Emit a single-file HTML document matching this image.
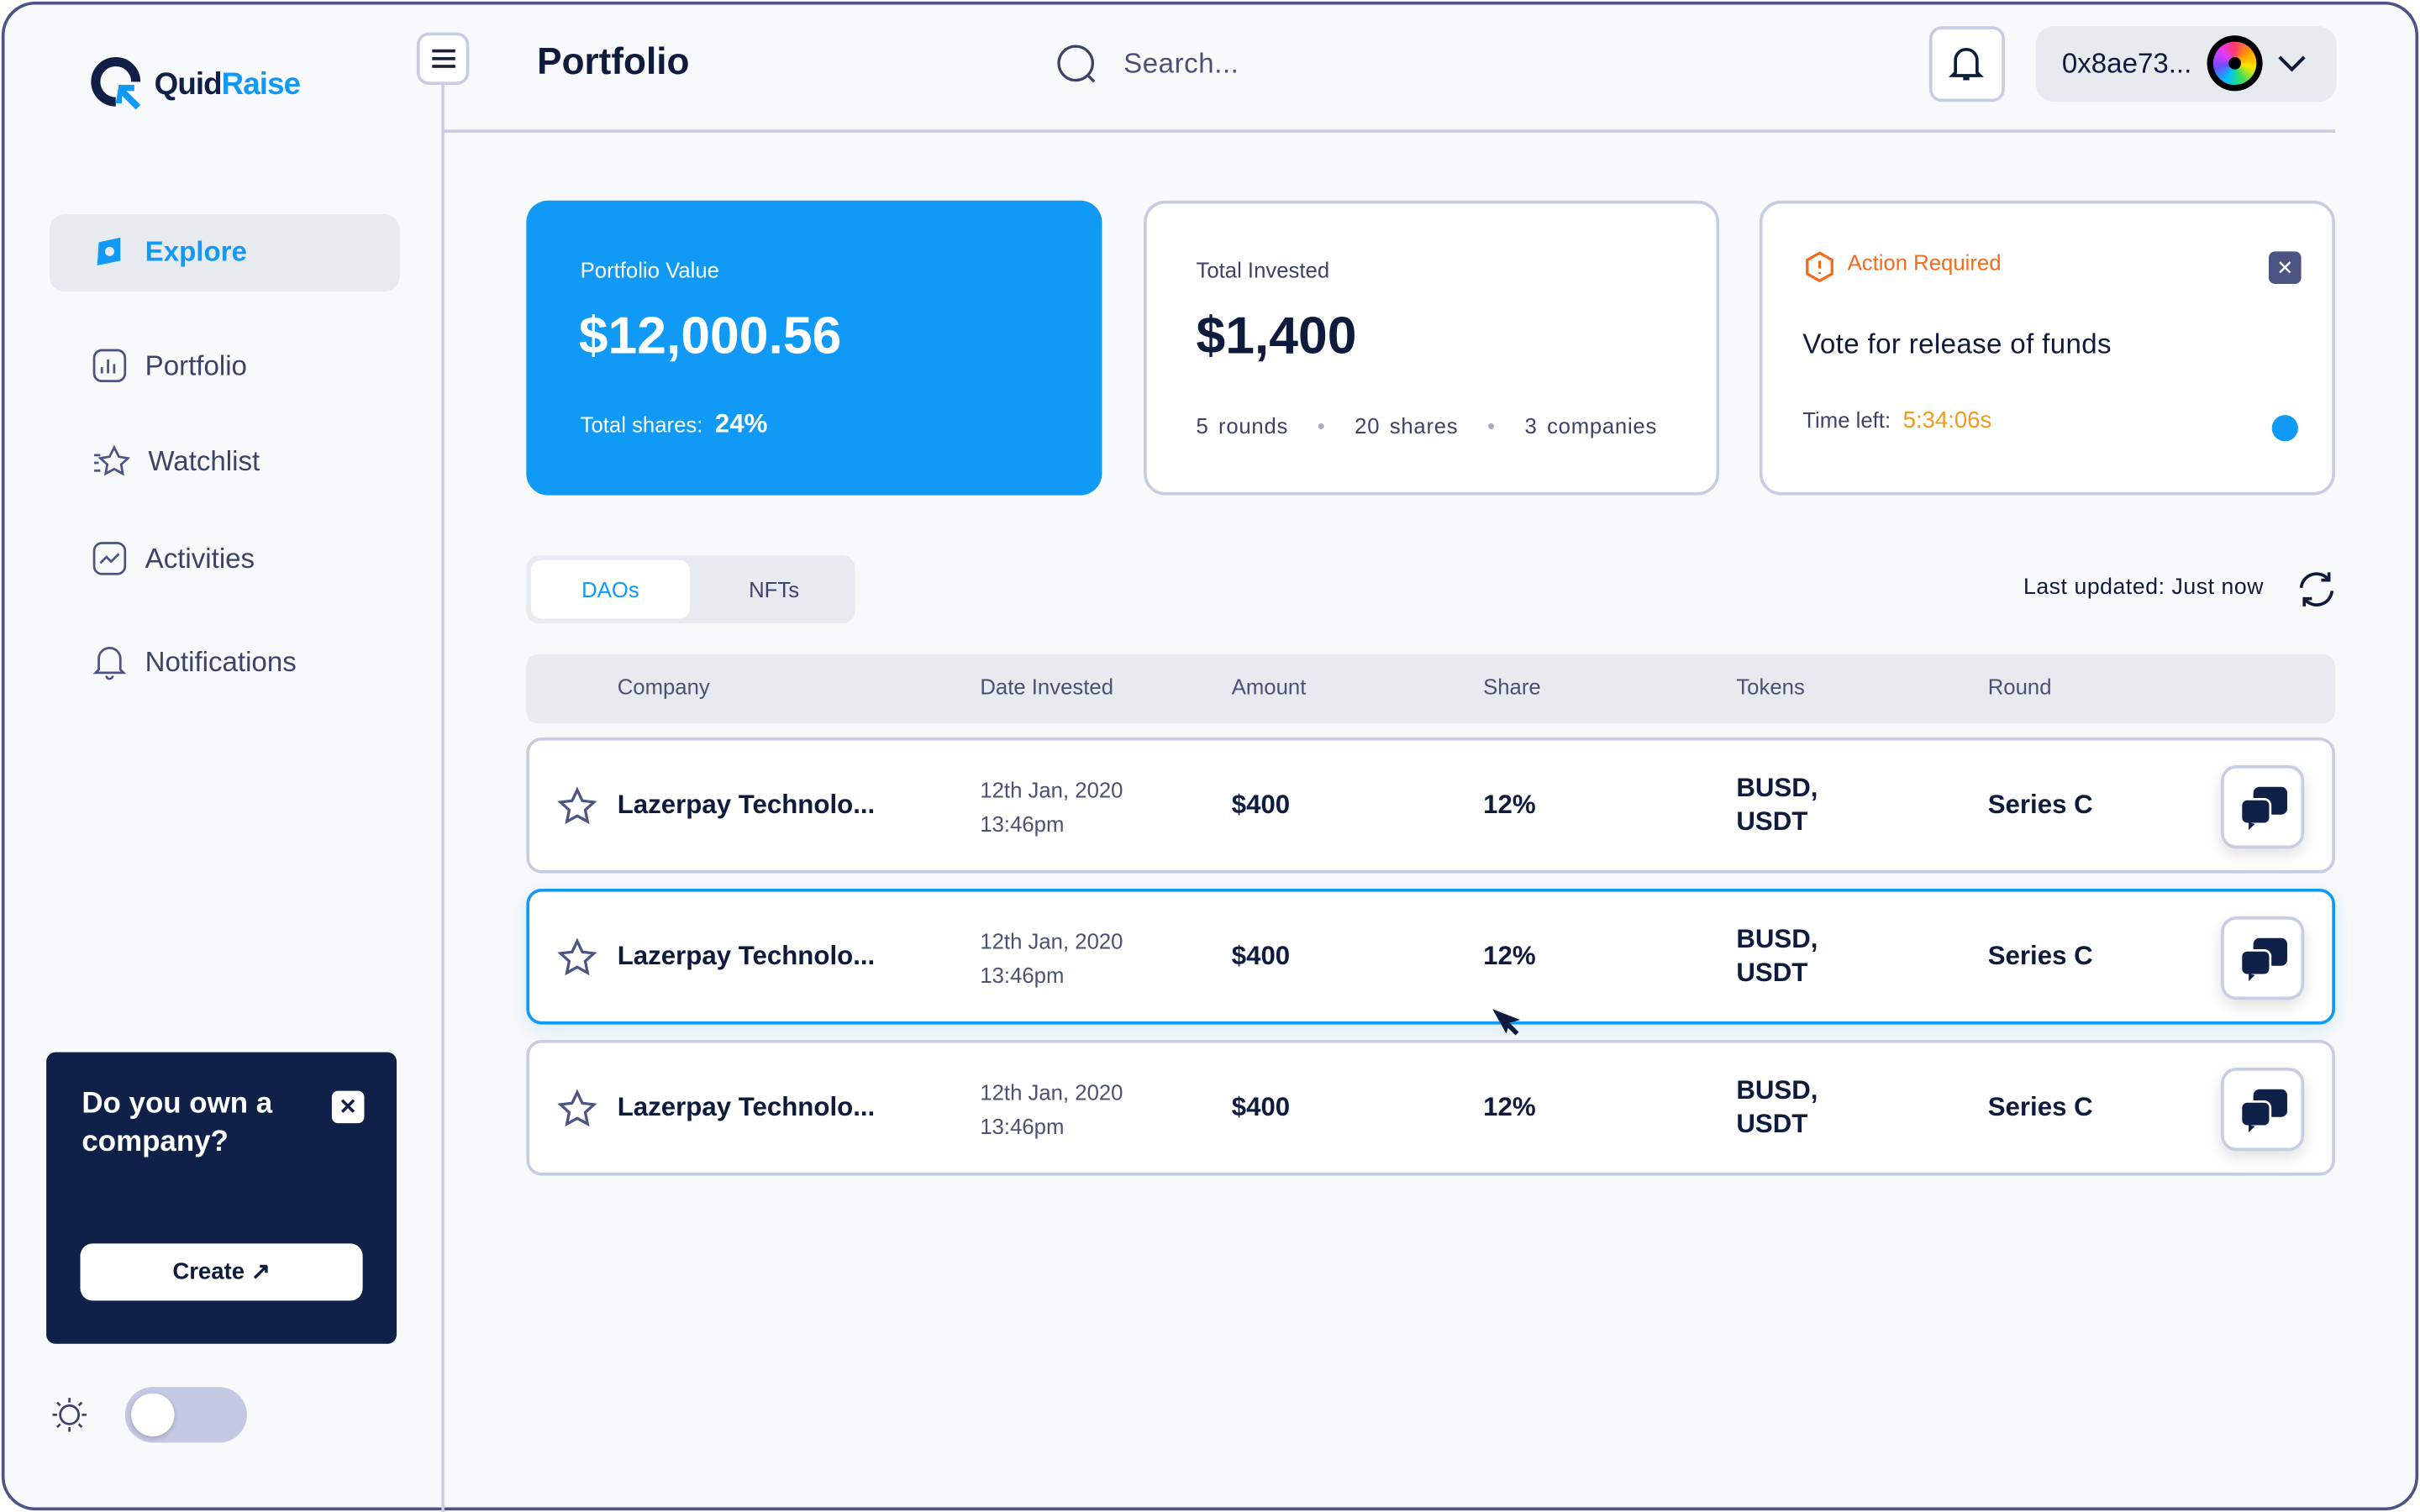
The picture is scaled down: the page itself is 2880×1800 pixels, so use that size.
<!DOCTYPE html>
<html><head><meta charset="utf-8"><style>
*{box-sizing:border-box;margin:0;padding:0}
html,body{width:2880px;height:1800px;overflow:hidden;background:#fff}
#s{width:1568px;height:980px;transform:scale(1.836735);transform-origin:0 0;position:relative;font-family:"Liberation Sans",sans-serif;color:#0f1b3d}
.frame{position:absolute;left:1px;top:1px;width:1566px;height:978px;border:2px solid #4b5483;border-radius:22px;background:#f8f9fb;overflow:hidden}
.a{position:absolute}
.card{position:absolute;border-radius:14px}
.nav{position:absolute;left:60px;font-size:18px;color:#3b4468;display:flex;align-items:center;gap:12px}
.row{position:absolute;left:341px;width:1172px;height:88px;background:#fff;border:2px solid #c8cde3;border-radius:10px}
.row .t{position:absolute;font-size:17px;font-weight:bold;color:#0f1b3d}
.row .d{position:absolute;left:292px;top:21px;font-size:14px;color:#4a5273;line-height:22px}
.chat{position:absolute;right:18px;top:16px;width:54px;height:54px;border:2px solid #c8cde3;border-radius:10px;background:#fff;box-shadow:0 4px 10px rgba(0,0,0,.12)}
.th{position:absolute;top:437px;font-size:14px;color:#4a5273}
</style></head><body><div id="s"><div class="frame"></div>
<div class="a" style="left:286px;top:54px;width:2px;height:926px;background:#c8cde3"></div>
<div class="a" style="left:288px;top:84px;width:1225px;height:2px;background:#c8cde3"></div>
<svg class="a" style="left:55px;top:36px" width="40" height="40" viewBox="0 0 40 40"><path d="M20 30 A13 13 0 1 1 33 17" fill="none" stroke="#0f1f45" stroke-width="6"/><path d="M22 19 h10 v4 h-5 l9 9 -3 3 -9 -9 v5 h-4z" fill="#119af5"/></svg>
<div class="a" style="left:100px;top:44px;font-size:20px;font-weight:bold;letter-spacing:-0.5px"><span style="color:#0f1f45">Quid</span><span style="color:#119af5">Raise</span></div>
<div class="a" style="left:270px;top:21px;width:34px;height:34px;border:2px solid #c8cde3;border-radius:8px;background:#fff"><div class="a" style="left:8px;top:9px;width:15px;height:2px;background:#1a2136;box-shadow:0 5px 0 #1a2136,0 10px 0 #1a2136"></div></div>
<div class="a" style="left:32px;top:139px;width:227px;height:50px;background:#e7eaee;border-radius:10px"></div>
<div class="nav" style="top:152px;color:#119af5;font-weight:bold"><svg width="22" height="22" viewBox="0 0 22 22"><path d="M4 5 L18 2 L18 17 L3 20 Z" fill="#119af5"/><circle cx="11" cy="11" r="3" fill="#e7eaee"/></svg>Explore</div>
<div class="nav" style="top:226px"><svg width="22" height="22" viewBox="0 0 22 22" fill="none" stroke="#4b5483" stroke-width="1.5"><rect x="1" y="1" width="20" height="20" rx="5"/><path d="M6 16v-4M10 16V7M14 16v-6"/></svg>Portfolio</div>
<div class="nav" style="top:288px"><svg width="24" height="22" viewBox="0 0 24 22" fill="none" stroke="#4b5483" stroke-width="1.5"><path d="M14 2l3 6 6 1-4.5 4 1 6-5.5-3-5.5 3 1-6L5 9l6-1z"/><path d="M1 7h4M1 12h3M1 17h4"/></svg>Watchlist</div>
<div class="nav" style="top:351px"><svg width="22" height="22" viewBox="0 0 22 22" fill="none" stroke="#4b5483" stroke-width="1.5"><rect x="1" y="1" width="20" height="20" rx="5"/><path d="M5 14l4-4 3 3 5-5"/></svg>Activities</div>
<div class="nav" style="top:417px"><svg width="22" height="24" viewBox="0 0 22 24" fill="none" stroke="#4b5483" stroke-width="1.5"><path d="M4 17V10a7 7 0 0 1 14 0v7l2 2H2z"/><path d="M9 21a2 2 0 0 0 4 0"/></svg>Notifications</div>
<div class="a" style="left:30px;top:682px;width:227px;height:189px;background:#0f2148;border-radius:6px"></div>
<div class="a" style="left:53px;top:703px;font-size:19px;color:#fff;line-height:25px;font-weight:bold">Do you own a<br>company?</div>
<div class="a" style="left:215px;top:707px;width:21px;height:21px;background:#fff;border-radius:4px;font-size:14px;text-align:center;line-height:21px;color:#0f2148;font-weight:bold">✕</div>
<div class="a" style="left:52px;top:806px;width:183px;height:37px;background:#fff;border-radius:8px;font-size:15px;font-weight:bold;text-align:center;line-height:37px;color:#0f1b3d">Create ↗</div>
<svg class="a" style="left:33px;top:905px" width="24" height="24" viewBox="0 0 24 24" fill="none" stroke="#3b4468" stroke-width="1.5"><circle cx="12" cy="12" r="6"/><path d="M12 1v3M12 20v3M1 12h3M20 12h3M4 4l2 2M18 18l2 2M4 20l2-2M18 6l2-2"/></svg>
<div class="a" style="left:81px;top:899px;width:79px;height:36px;background:#c3c8e3;border-radius:18px"></div>
<div class="a" style="left:85px;top:903px;width:28px;height:28px;background:#fff;border-radius:50%;box-shadow:0 1px 3px rgba(0,0,0,.2)"></div>
<div class="a" style="left:348px;top:27px;font-size:24px;font-weight:bold;color:#0f1b3d">Portfolio</div>
<svg class="a" style="left:684px;top:28px" width="28" height="28" viewBox="0 0 28 28" fill="none" stroke="#3b4468" stroke-width="1.8"><circle cx="13" cy="13" r="11"/><path d="M21 21l4 4"/></svg>
<div class="a" style="left:728px;top:31px;font-size:18px;color:#4a5273;letter-spacing:0.3px">Search...</div>
<div class="a" style="left:1250px;top:17px;width:49px;height:49px;border:2px solid #c8cde3;border-radius:8px;background:#fff"></div>
<svg class="a" style="left:1262px;top:29px" width="24" height="26" viewBox="0 0 24 26" fill="none" stroke="#0f1b3d" stroke-width="2"><path d="M5 18V10a7 7 0 0 1 14 0v8l2 2H3z"/><path d="M10 22h4"/></svg>
<div class="a" style="left:1319px;top:17px;width:195px;height:49px;background:#e7eaee;border-radius:12px"></div>
<div class="a" style="left:1336px;top:31px;font-size:18px;color:#0f1b3d">0x8ae73...</div>
<div class="a" style="left:1430px;top:23px;width:36px;height:36px;border-radius:50%;background:#000"><div class="a" style="left:4px;top:4px;width:28px;height:28px;border-radius:50%;background:conic-gradient(#ff3b6b,#ff9b00,#ffe600,#3be25a,#00c2ff,#6a4dff,#e23bff,#ff3b6b)"></div><div class="a" style="left:14px;top:14px;width:8px;height:8px;border-radius:50%;background:#000"></div></div>
<svg class="a" style="left:1474px;top:33px" width="22" height="16" viewBox="0 0 22 16" fill="none" stroke="#0f1b3d" stroke-width="2.2"><path d="M3 4l8 8 8-8"/></svg>
<div class="card" style="left:341px;top:130px;width:373px;height:191px;background:#119af5"></div>
<div class="a" style="left:376px;top:167px;font-size:14px;color:#fff">Portfolio Value</div>
<div class="a" style="left:375px;top:199px;font-size:34px;font-weight:bold;color:#fff">$12,000.56</div>
<div class="a" style="left:376px;top:265px;font-size:14px;color:#fff">Total shares: <span style="font-size:17px;font-weight:bold;margin-left:4px">24%</span></div>
<div class="card" style="left:741px;top:130px;width:373px;height:191px;background:#fff;border:2px solid #c8cde3"></div>
<div class="a" style="left:775px;top:167px;font-size:14px;color:#3b4468">Total Invested</div>
<div class="a" style="left:775px;top:199px;font-size:34px;font-weight:bold;color:#0f1b3d">$1,400</div>
<div class="a" style="left:775px;top:268px;font-size:14px;color:#3b4468;letter-spacing:0.4px;word-spacing:2px">5 rounds &nbsp;&nbsp;<span style="color:#aab">•</span>&nbsp;&nbsp; 20 shares &nbsp;&nbsp;<span style="color:#aab">•</span>&nbsp;&nbsp; 3 companies</div>
<div class="card" style="left:1140px;top:130px;width:373px;height:191px;background:#fff;border:2px solid #c8cde3"></div>
<svg class="a" style="left:1168px;top:162px" width="22" height="22" viewBox="0 0 22 22" fill="none" stroke="#f26b1d" stroke-width="1.8"><path d="M11 2l8 4.5v9L11 20l-8-4.5v-9z"/><path d="M11 7v5M11 14.5v1"/></svg>
<div class="a" style="left:1197px;top:162px;font-size:14px;color:#f26b1d">Action Required</div>
<div class="a" style="left:1470px;top:163px;width:21px;height:21px;background:#4b5483;border-radius:4px;color:#fff;font-size:13px;text-align:center;line-height:21px">✕</div>
<div class="a" style="left:1168px;top:213px;font-size:18px;color:#0f1b3d;letter-spacing:0.2px">Vote for release of funds</div>
<div class="a" style="left:1168px;top:264px;font-size:14px;color:#3b4468">Time left: <span style="color:#f29a1d;font-size:15px;margin-left:4px">5:34:06s</span></div>
<div class="a" style="left:1472px;top:269px;width:17px;height:17px;border-radius:50%;background:#119af5"></div>
<div class="a" style="left:341px;top:360px;width:213px;height:44px;background:#e7eaee;border-radius:8px"></div>
<div class="a" style="left:344px;top:363px;width:103px;height:38px;background:#fff;border-radius:7px;font-size:14px;color:#119af5;text-align:center;line-height:38px">DAOs</div>
<div class="a" style="left:450px;top:363px;width:103px;height:38px;font-size:14px;color:#3b4468;text-align:center;line-height:38px">NFTs</div>
<div class="a" style="left:1311px;top:373px;font-size:14.5px;color:#0f1b3d;letter-spacing:0.3px">Last updated: Just now</div>
<svg class="a" style="left:1487px;top:368px" width="28" height="28" viewBox="0 0 28 28" fill="none" stroke="#0f1b3d" stroke-width="2"><path d="M4 13a10 10 0 0 1 18-5M24 15a10 10 0 0 1-18 5"/><path d="M22 3v5h-5M6 25v-5h5"/></svg>
<div class="a" style="left:341px;top:424px;width:1172px;height:45px;background:#e7eaee;border-radius:8px"></div>
<div class="th" style="left:400px">Company</div><div class="th" style="left:635px">Date Invested</div><div class="th" style="left:798px">Amount</div><div class="th" style="left:961px">Share</div><div class="th" style="left:1125px">Tokens</div><div class="th" style="left:1288px">Round</div>
<div class="row" style="top:478px">
<svg class="a" style="left:18px;top:30px" width="26" height="26" viewBox="0 0 26 26" fill="none" stroke="#4b5483" stroke-width="1.8"><path d="M13 2l3.3 7 7.5.9-5.6 5.1 1.5 7.5L13 18.8 6.3 22.5l1.5-7.5L2.2 9.9l7.5-.9z"/></svg>
<div class="t" style="left:57px;top:32px">Lazerpay Technolo...</div><div class="d">12th Jan, 2020<br>13:46pm</div>
<div class="t" style="left:455px;top:32px">$400</div><div class="t" style="left:618px;top:32px">12%</div>
<div class="t" style="left:782px;top:20px;line-height:22px">BUSD,<br>USDT</div><div class="t" style="left:945px;top:32px">Series C</div>
<div class="chat"><svg class="a" style="left:10px;top:11px" width="32" height="30" viewBox="0 0 32 30"><rect x="9" y="1" width="22" height="18" rx="4" fill="#0f2148"/><rect x="1" y="9" width="19" height="16" rx="4" fill="#0f2148" stroke="#fff" stroke-width="1.5"/><path d="M6 24v5l4-4z" fill="#0f2148"/></svg></div></div>
<div class="row" style="top:576px;border-color:#119af5;box-shadow:0 4px 12px rgba(17,154,245,.15)">
<svg class="a" style="left:18px;top:30px" width="26" height="26" viewBox="0 0 26 26" fill="none" stroke="#4b5483" stroke-width="1.8"><path d="M13 2l3.3 7 7.5.9-5.6 5.1 1.5 7.5L13 18.8 6.3 22.5l1.5-7.5L2.2 9.9l7.5-.9z"/></svg>
<div class="t" style="left:57px;top:32px">Lazerpay Technolo...</div><div class="d">12th Jan, 2020<br>13:46pm</div>
<div class="t" style="left:455px;top:32px">$400</div><div class="t" style="left:618px;top:32px">12%</div>
<div class="t" style="left:782px;top:20px;line-height:22px">BUSD,<br>USDT</div><div class="t" style="left:945px;top:32px">Series C</div>
<div class="chat"><svg class="a" style="left:10px;top:11px" width="32" height="30" viewBox="0 0 32 30"><rect x="9" y="1" width="22" height="18" rx="4" fill="#0f2148"/><rect x="1" y="9" width="19" height="16" rx="4" fill="#0f2148" stroke="#fff" stroke-width="1.5"/><path d="M6 24v5l4-4z" fill="#0f2148"/></svg></div></div>
<div class="row" style="top:674px">
<svg class="a" style="left:18px;top:30px" width="26" height="26" viewBox="0 0 26 26" fill="none" stroke="#4b5483" stroke-width="1.8"><path d="M13 2l3.3 7 7.5.9-5.6 5.1 1.5 7.5L13 18.8 6.3 22.5l1.5-7.5L2.2 9.9l7.5-.9z"/></svg>
<div class="t" style="left:57px;top:32px">Lazerpay Technolo...</div><div class="d">12th Jan, 2020<br>13:46pm</div>
<div class="t" style="left:455px;top:32px">$400</div><div class="t" style="left:618px;top:32px">12%</div>
<div class="t" style="left:782px;top:20px;line-height:22px">BUSD,<br>USDT</div><div class="t" style="left:945px;top:32px">Series C</div>
<div class="chat"><svg class="a" style="left:10px;top:11px" width="32" height="30" viewBox="0 0 32 30"><rect x="9" y="1" width="22" height="18" rx="4" fill="#0f2148"/><rect x="1" y="9" width="19" height="16" rx="4" fill="#0f2148" stroke="#fff" stroke-width="1.5"/><path d="M6 24v5l4-4z" fill="#0f2148"/></svg></div></div>
<svg class="a" style="left:965px;top:652px" width="22" height="22" viewBox="0 0 22 22"><path d="M2 2l18 7-7 2-2 7z" fill="#0f1b3d"/><path d="M12 12l6 6" stroke="#0f1b3d" stroke-width="3"/></svg>
</div></body></html>
